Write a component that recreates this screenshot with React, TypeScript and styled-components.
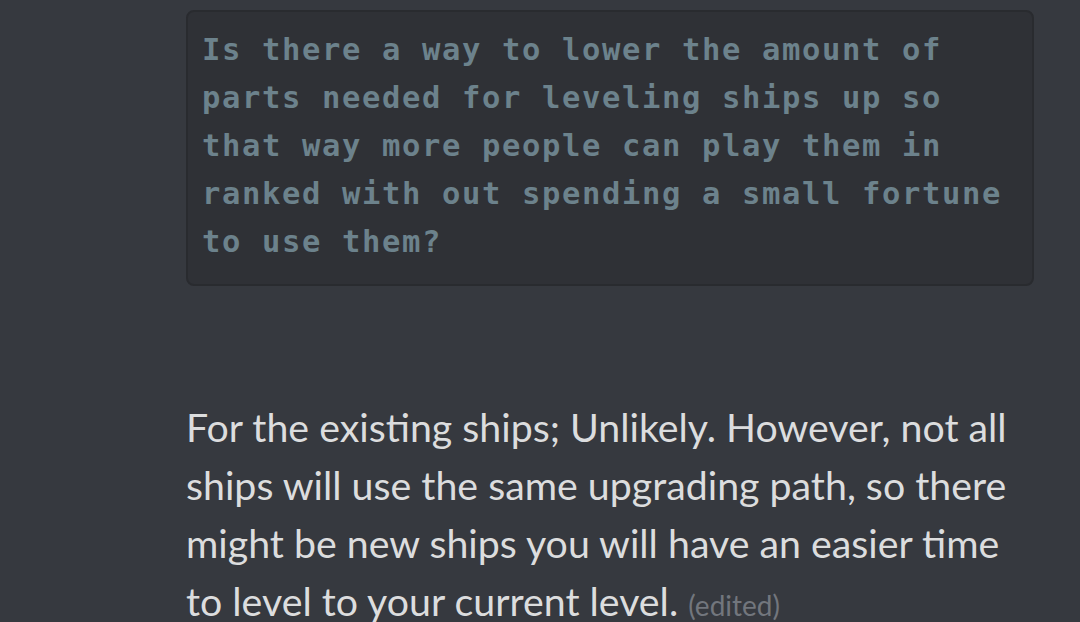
import React from "react";
import styled, { createGlobalStyle } from "styled-components";

const GlobalStyle = createGlobalStyle`
	html, body {
		margin: 0;
		padding: 0;
		background: #36393f;
		overflow: hidden;
	}
`;

const Page = styled.div`
	width: 1080px;
	height: 622px;
	box-sizing: border-box;
	padding: 10px 46px 0 186px;
	display: flex;
	flex-direction: column;
	background: #36393f;
`;

const CodeBlock = styled.pre`
	margin: 0;
	box-sizing: border-box;
	width: 848px;
	padding: 14px 14px 18px 14px;
	background: #2f3136;
	border: 2px solid #292b2f;
	border-radius: 8px;
	font-family: "DejaVu Sans Mono", "Liberation Mono", monospace;
	font-weight: bold;
	font-size: 30.5px;
	letter-spacing: 1.64px;
	line-height: 48px;
	color: #6c828c;
	white-space: pre-wrap;
`;

const Message = styled.p`
	margin: 112px 0 0 0;
	font-family: Lato, "Noto Sans", sans-serif;
	font-size: 39.3px;
	line-height: 58px;
	color: #dcddde;
`;

const Edited = styled.span`
	font-size: 28px;
	color: #72767d;
`;

const question = [
	"Is there a way to lower the amount of",
	"parts needed for leveling ships up so",
	"that way more people can play them in",
	"ranked with out spending a small fortune",
	"to use them?",
];

const answer = [
	"For the existing ships; Unlikely. However, not all",
	"ships will use the same upgrading path, so there",
	"might be new ships you will have an easier time",
];

export default function App() {
	return (
		<>
			<GlobalStyle />
			<Page>
				<CodeBlock>{question.join("\n")}</CodeBlock>
				<Message>
					{answer.map((line, i) => (
						<React.Fragment key={i}>
							{line}
							<br />
						</React.Fragment>
					))}
					to level to your current level. <Edited>(edited)</Edited>
				</Message>
			</Page>
		</>
	);
}
